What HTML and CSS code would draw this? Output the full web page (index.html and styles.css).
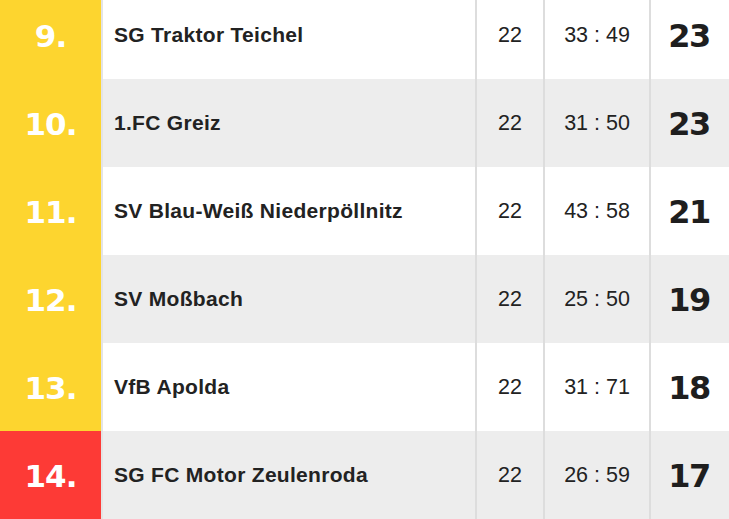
FILE: index.html
```html
<!DOCTYPE html>
<html lang="de">
<head>
<meta charset="utf-8">
<link rel="stylesheet" href="styles.css">
</head>
<body>
<div class="table">
  <div class="row">
    <div class="rank">9.</div>
    <div class="team">SG Traktor Teichel</div>
    <div class="games">22</div>
    <div class="goals">33 : 49</div>
    <div class="points">23</div>
  </div>
  <div class="row alt">
    <div class="rank">10.</div>
    <div class="team">1.FC Greiz</div>
    <div class="games">22</div>
    <div class="goals">31 : 50</div>
    <div class="points">23</div>
  </div>
  <div class="row">
    <div class="rank">11.</div>
    <div class="team">SV Blau-Weiß Niederpöllnitz</div>
    <div class="games">22</div>
    <div class="goals">43 : 58</div>
    <div class="points">21</div>
  </div>
  <div class="row alt">
    <div class="rank">12.</div>
    <div class="team">SV Moßbach</div>
    <div class="games">22</div>
    <div class="goals">25 : 50</div>
    <div class="points">19</div>
  </div>
  <div class="row">
    <div class="rank">13.</div>
    <div class="team">VfB Apolda</div>
    <div class="games">22</div>
    <div class="goals">31 : 71</div>
    <div class="points">18</div>
  </div>
  <div class="row alt">
    <div class="rank relegation">14.</div>
    <div class="team">SG FC Motor Zeulenroda</div>
    <div class="games">22</div>
    <div class="goals">26 : 59</div>
    <div class="points">17</div>
  </div>
</div>
</body>
</html>
```

FILE: styles.css
```css
html, body {
  margin: 0;
  padding: 0;
  overflow: hidden;
  background: #ffffff;
}

.table {
  margin-top: -9px;
  width: 729px;
  font-family: "Liberation Sans", Arial, sans-serif;
  color: #222222;
}

.row {
  display: grid;
  grid-template-columns: 101px 374px 68px 106px 78px;
  height: 88px;
  background: #ffffff;
}

.row.alt {
  background: #ededed;
}

.row > div {
  display: flex;
  align-items: center;
}

.rank {
  justify-content: center;
  background: #fdd52f;
  color: #ffffff;
  font-family: "DejaVu Sans", sans-serif;
  font-weight: 700;
  font-size: 31px;
  letter-spacing: -1px;
  padding-top: 2px;
}

.rank.relegation {
  background: #fd3a36;
}

.team {
  border-left: 2px solid #e4e4e4;
  padding-left: 11px;
  font-weight: 700;
  font-size: 21px;
  letter-spacing: 0.3px;
}

.games, .goals, .points {
  justify-content: center;
  border-left: 2px solid #dddddd;
}

.games, .goals {
  font-size: 21.5px;
}

.points {
  font-family: "DejaVu Sans", sans-serif;
  font-weight: 700;
  font-size: 32px;
  letter-spacing: -1.5px;
  padding-top: 2px;
  color: #1e1e1e;
}
```
